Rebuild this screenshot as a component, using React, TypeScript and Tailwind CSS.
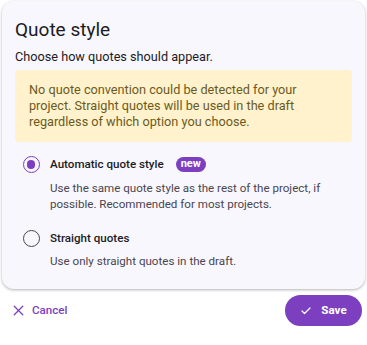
import { Check, X } from "lucide-react";

function Radio({ checked }: { checked: boolean }) {
  return (
    <span
      className={`flex h-[17px] w-[17px] shrink-0 items-center justify-center rounded-full border-[1.5px] ${
        checked ? "border-[#7b3fbf]" : "border-[#49454f]"
      }`}
    >
      {checked && <span className="h-[8.5px] w-[8.5px] rounded-full bg-[#7b3fbf]" />}
    </span>
  );
}

export default function App() {
  return (
    <div className="h-[345px] w-[367px] overflow-hidden bg-white pt-px font-['Roboto',sans-serif] text-[#1c1b1f]">
      <div className="mx-[2px] rounded-[12px] bg-[#f8f7fd] px-[13px] pt-[16.5px] pb-[19.5px] shadow-[0_1px_3px_rgba(0,0,0,0.3)]">
        <h2 className="text-[19px] leading-[24px]">Quote style</h2>
        <p className="mt-[7px] text-[12.7px] leading-[16px]">Choose how quotes should appear.</p>

        {/* warning */}
        <div className="mt-[5.3px] rounded-[4px] bg-[#fff2cc] pt-[12.7px] pb-[12px] pl-[14px] pr-[14px] text-[12.7px] leading-[16px] text-[#6b5a1e]">
          No quote convention could be detected for your project. Straight quotes will be used in the
          draft regardless of which option you choose.
        </div>

        <div className="mt-[13px] pl-[7.5px]">
          <div className="flex h-[18px] items-center">
            <Radio checked />
            <span className="ml-[10.5px] text-[11.6px] font-medium">Automatic quote style</span>
            <span className="ml-[12px] flex h-[15px] items-center rounded-full bg-[#7b3fbf] px-[5px] text-[11px] font-bold text-white">
              new
            </span>
          </div>
          <p className="mt-[7.6px] pl-[27.5px] text-[11.6px] leading-[15.5px] text-[#49454f]">
            Use the same quote style as the rest of the project, if possible. Recommended for most
            projects.
          </p>

          <div className="mt-[17.4px] flex h-[18px] items-center">
            <Radio checked={false} />
            <span className="ml-[10.5px] text-[11.6px] font-medium">Straight quotes</span>
          </div>
          <p className="mt-[7px] pl-[27.5px] text-[11.6px] leading-[15.5px] text-[#49454f]">
            Use only straight quotes in the draft.
          </p>
        </div>
      </div>

      <div className="mt-[6px] flex h-[31px] items-center justify-between pl-[10px] pr-[5px]">
        <button className="flex items-center gap-[5px] text-[11.6px] font-medium text-[#7b3fbf]">
          <X className="h-[17px] w-[17px]" strokeWidth={1.75} />
          Cancel
        </button>
        <button className="flex h-[31px] w-[77px] items-center justify-center gap-[9px] rounded-full bg-[#7b3fbf] text-[11.6px] font-bold text-white">
          <Check className="h-[12px] w-[12px]" strokeWidth={2.5} />
          Save
        </button>
      </div>
    </div>
  );
}
